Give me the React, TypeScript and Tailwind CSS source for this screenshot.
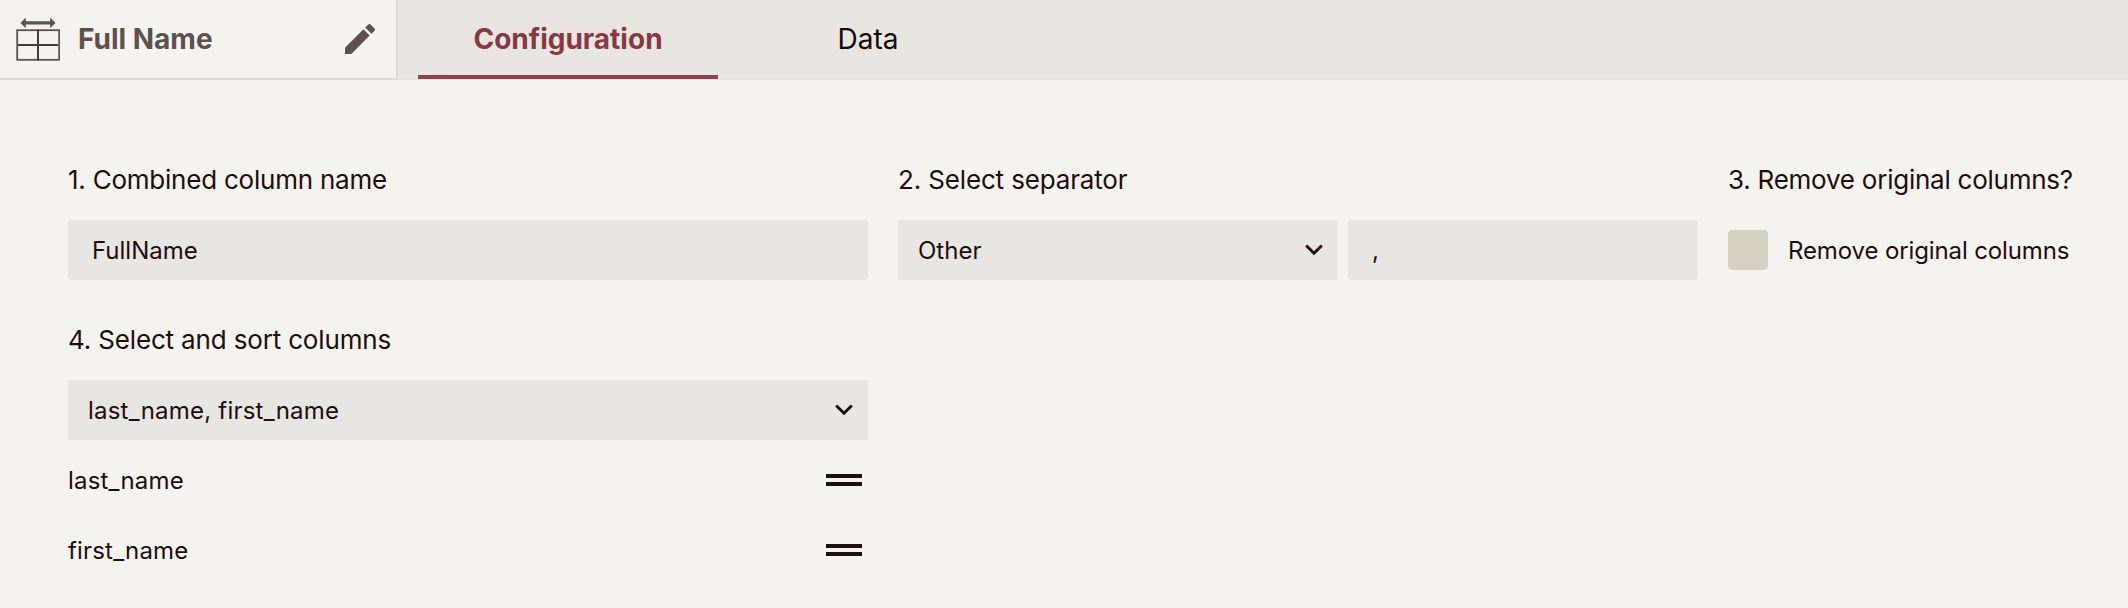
import React from "react";

function TableIcon() {
  return (
    <svg width="44" height="46" viewBox="0 0 44 46" className="shrink-0">
      <rect x="1.200" y="14.200" width="42" height="29.600" fill="none" stroke="#5c5050" strokeWidth="1.800" />
      <path d="M22 13.500V44.500M2 29H42" stroke="#463a3a" strokeWidth="2" />
      <path d="M4.500 7 9.800 1.500V5.300H34.200V1.500L39.500 7 34.200 12.300V8.500H9.800V12.300Z" fill="#5c5050" />
    </svg>
  );
}

function PencilIcon() {
  return (
    <svg width="40" height="40" viewBox="0 0 24 24" fill="#5c5050" className="shrink-0">
      <path d="M3 17.250V21h3.750L17.810 9.940l-3.750-3.750L3 17.250zM20.710 7.040a.996.996 0 0 0 0-1.410l-2.340-2.340a.996.996 0 0 0-1.410 0l-1.830 1.830 3.750 3.750 1.830-1.830z" />
    </svg>
  );
}

function Chevron() {
  return (
    <svg width="18" height="12" viewBox="0 0 18 12" fill="none" className="shrink-0">
      <path d="M1.200 1.500 9 9.200 16.800 1.500" stroke="#1f0d10" strokeWidth="3" />
    </svg>
  );
}

function SortRow({ name }: { name: string }) {
  return (
    <div className="flex h-[70px] items-center justify-between pr-1.5">
      <span className="pt-0.5 text-2xl tracking-[0.18px]">{name}</span>
      <div className="flex flex-col gap-1">
        <div className="h-1 w-9 bg-[#1f0d10]" />
        <div className="h-1 w-9 bg-[#1f0d10]" />
      </div>
    </div>
  );
}

export default function App() {
  return (
    <div className="h-[608px] w-[2128px] overflow-hidden bg-[#f4f3ee] font-['Inter',sans-serif] text-[#1f0d10]">
      <header className="flex h-20">
        <div className="flex w-[398px] shrink-0 items-center border-r-2 border-b-2 border-[#dbdad8] pr-4 pl-4">
          <TableIcon />
          <span className="ml-[18px] text-[28px] font-bold text-[#5c5050]">Full Name</span>
          <span className="ml-auto">
            <PencilIcon />
          </span>
        </div>
        <nav className="flex flex-1 border-b border-[#e2e2e0] bg-[#e9e6df] pl-5 text-[28px]">
          <div className="flex w-[300px] items-center justify-center border-b-4 border-[#963f4e] pt-0.5 font-bold text-[#873845]">
            Configuration
          </div>
          <div className="flex w-[300px] items-center justify-center pb-0.5 text-[#140a0a]">Data</div>
        </nav>
      </header>

      <main className="px-[68px] pt-20">
        <div className="flex gap-[30px]">
          <section className="w-[800px] shrink-0">
            <h2 className="flex h-10 items-center pb-0.5 text-[26px] tracking-[-0.23px]">1. Combined column name</h2>
            <div className="mt-5 flex h-[60px] items-center rounded bg-[#e7e6e2] px-6 pt-0.5 text-2xl">FullName</div>
          </section>
          <section className="w-[800px] shrink-0">
            <h2 className="flex h-10 items-center pb-0.5 text-[26px] tracking-[-0.15px]">2. Select separator</h2>
            <div className="mt-5 flex gap-2.5 text-2xl">
              <div className="flex h-[60px] w-[440px] items-center justify-between bg-[#e7e6e2] pr-[15px] pl-5">
                <span className="pt-0.5">Other</span>
                <Chevron />
              </div>
              <div className="flex h-[60px] flex-1 items-center rounded bg-[#e7e6e2] px-6 pt-0.5">,</div>
            </div>
          </section>
          <section className="shrink-0 whitespace-nowrap">
            <h2 className="flex h-10 items-center pb-0.5 text-[26px] tracking-[-0.24px]">3. Remove original columns?</h2>
            <div className="mt-5 flex h-[60px] items-center gap-5 text-2xl tracking-[-0.12px]">
              <div className="size-10 rounded bg-[#d5d1c0]" />
              <span className="pt-0.5">Remove original columns</span>
            </div>
          </section>
        </div>

        <section className="mt-10 w-[800px]">
          <h2 className="flex h-10 items-center pb-0.5 text-[26px] tracking-[-0.16px]">4. Select and sort columns</h2>
          <div className="mt-5 flex h-[60px] items-center justify-between bg-[#e7e6e2] pr-[15px] pl-5 text-2xl tracking-[0.22px]">
            <span className="pt-0.5">last_name, first_name</span>
            <Chevron />
          </div>
          <div className="mt-[5px]">
            <SortRow name="last_name" />
            <SortRow name="first_name" />
          </div>
        </section>
      </main>
    </div>
  );
}
